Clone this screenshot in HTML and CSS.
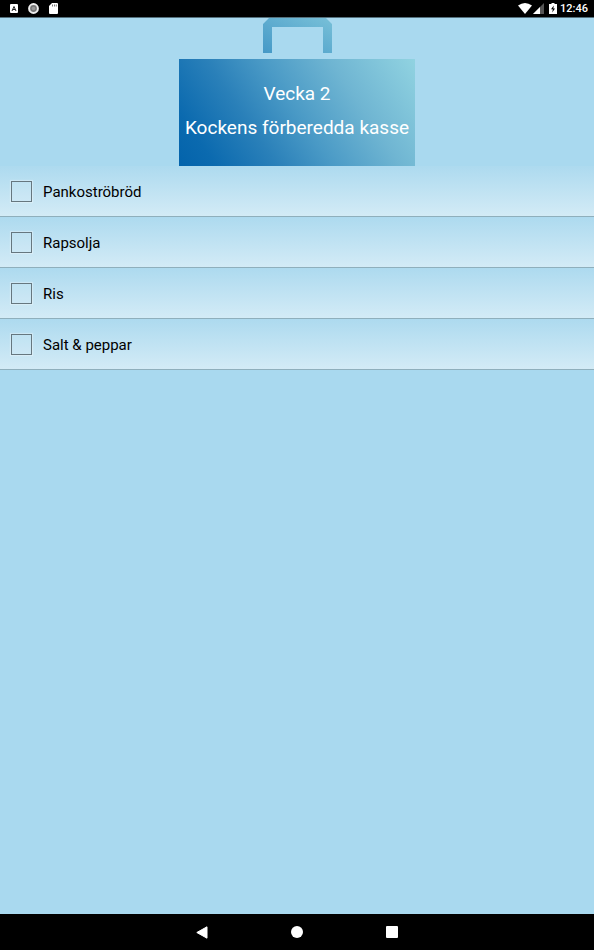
FILE: index.html
```
<!DOCTYPE html>
<html lang="sv">
<head>
    <meta charset="UTF-8">
    <meta name="viewport" content="width=device-width, initial-scale=1.0">
    <title>Kockens förberedda kasse</title>
    <link rel="stylesheet" href="styles.css">
</head>
<body>
    <header class="statusbar">
        <div class="status-left">
            <svg width="8" height="9" viewBox="0 0 8 9">
                <rect width="8" height="9" rx="1" fill="#fff"/>
                <path d="M2 7 L4 2.5 L6 7 M2.8 5.5 H5.2" fill="none" stroke="#222" stroke-width="1"/>
            </svg>
            <svg width="11" height="11" viewBox="0 0 11 11">
                <circle cx="5.5" cy="5.5" r="4.4" fill="#777" stroke="#eee" stroke-width="2"/>
                <circle cx="5.5" cy="5.5" r="1.8" fill="#999"/>
            </svg>
            <svg width="9" height="11" viewBox="0 0 9 11">
                <path d="M3 0 H8 Q9 0 9 1 V10 Q9 11 8 11 H1 Q0 11 0 10 V3 Z" fill="#fff"/>
                <path d="M3.5 1.5 V3.5 M5.5 1.5 V3.5 M7.3 1.5 V3.5" stroke="#555" stroke-width="0.8"/>
            </svg>
        </div>
        <div class="status-right">
            <svg width="14" height="11" viewBox="0 0 14 11">
                <path d="M7 11 L0 2.6 Q7 -2.4 14 2.6 Z" fill="#fff"/>
            </svg>
            <svg class="signal" width="11" height="11" viewBox="0 0 11 11">
                <path d="M11 0 V11 H0 Z" fill="#555"/>
                <path d="M7 4 V11 H0 Z" fill="#fff"/>
            </svg>
            <svg class="battery" width="8" height="11" viewBox="0 0 8 11">
                <path d="M2.5 0 H5.5 V1 H8 V11 H0 V1 H2.5 Z" fill="#fff"/>
                <path d="M4.8 2.5 L2 6.3 H3.8 L3.3 9.5 L6 5.6 H4.3 Z" fill="#000"/>
            </svg>
            <span>12:46</span>
        </div>
    </header>

    <main class="content">
        <div class="bag">
            <svg class="handle" width="69" height="35" viewBox="0 0 69 35">
                <defs>
                    <linearGradient id="handleFill" x1="0" y1="1" x2="1" y2="0">
                        <stop offset="0" stop-color="#4599c7"/>
                        <stop offset="1" stop-color="#78c0d8"/>
                    </linearGradient>
                </defs>
                <path d="M0 35 V6 L6 0 H63 L69 6 V35 H60 V9 H9 V35 Z" fill="url(#handleFill)"/>
            </svg>
            <div class="bag-body">
                <h1>Vecka 2</h1>
                <h2>Kockens förberedda kasse</h2>
            </div>
        </div>

        <ul class="list">
            <li class="item">
                <input type="checkbox" id="item1">
                <label for="item1">Pankoströbröd</label>
            </li>
            <li class="item">
                <input type="checkbox" id="item2">
                <label for="item2">Rapsolja</label>
            </li>
            <li class="item">
                <input type="checkbox" id="item3">
                <label for="item3">Ris</label>
            </li>
            <li class="item">
                <input type="checkbox" id="item4">
                <label for="item4">Salt &amp; peppar</label>
            </li>
        </ul>
    </main>

    <nav class="navbar">
        <button type="button" aria-label="Tillbaka">
            <svg width="12" height="13" viewBox="0 0 12 13"><path d="M11 0.8 V12.2 L0.8 6.5 Z" fill="#fff" stroke="#fff" stroke-linejoin="round"/></svg>
        </button>
        <button type="button" aria-label="Hem">
            <svg width="12" height="12" viewBox="0 0 12 12"><circle cx="6" cy="6" r="6" fill="#fff"/></svg>
        </button>
        <button type="button" aria-label="Översikt">
            <svg width="12" height="12" viewBox="0 0 12 12"><rect width="12" height="12" rx="1" fill="#fff"/></svg>
        </button>
    </nav>
</body>
</html>
```
FILE: styles.css
```
* {
    box-sizing: border-box;
}
body {
    display: flex;
    flex-direction: column;
    min-height: 100vh;
    margin: 0;
    font-family: Roboto, Arial, sans-serif;
    background-color: #a9d9ef;
    color: #000;
}
svg {
    display: block;
}
.statusbar {
    display: flex;
    justify-content: space-between;
    align-items: center;
    height: 18px;
    padding: 0 6px 0 10px;
    background-color: #000;
    border-bottom: 1px solid #54707c;
    color: #fff;
}
.status-left {
    display: flex;
    align-items: center;
    gap: 10px;
}
.status-right {
    display: flex;
    align-items: center;
    font-size: 11px;
    font-weight: 500;
    line-height: 16px;
}
.signal {
    margin-left: 1px;
}
.battery {
    margin: 0 3px 0 5px;
}
.content {
    flex: 1;
}
.bag {
    display: flex;
    flex-direction: column;
    align-items: center;
}
.handle {
    margin-bottom: 6px;
}
.bag-body {
    padding: 18px 6px 21px;
    background: linear-gradient(56deg, #0363ab 0%, #0b6aaf 12%, #2a80b9 32%, #4a9ac6 50%, #6fb5d2 72%, #91d3e1 100%);
    color: #fff;
    text-align: center;
}
.bag-body h1,
.bag-body h2 {
    margin: 0;
    font-size: 19px;
    font-weight: 400;
    line-height: 34px;
}
.list {
    margin: 0;
    padding: 0;
    list-style: none;
}
.item {
    display: flex;
    align-items: center;
    gap: 11px;
    height: 51px;
    padding: 0 11px;
    border-bottom: 1px solid #8fafbc;
    background: linear-gradient(#addaef, #d3ebf6);
    font-size: 15px;
}
.item label {
    flex: 1;
    padding-top: 2px;
    line-height: 20px;
}
.item input {
    appearance: none;
    width: 21px;
    height: 21px;
    margin: 0;
    border: 1px solid #66777f;
    background-color: rgba(255, 255, 255, 0.1);
    box-shadow: 0 0 1px 1px rgba(255, 255, 255, 0.3);
}
.item input:checked {
    background-color: #0363ab;
}
.navbar {
    display: flex;
    justify-content: center;
    height: 36px;
    background-color: #000;
}
.navbar button {
    display: flex;
    align-items: center;
    justify-content: center;
    width: 16%;
    padding: 0;
    border: none;
    background: none;
}
```
